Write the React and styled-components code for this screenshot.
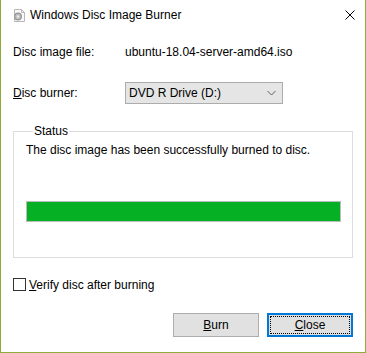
import React from "react"
import styled, { createGlobalStyle } from "styled-components"

const GlobalStyle = createGlobalStyle`
  html, body {
    margin: 0;
    padding: 0;
    background: #ffffff;
  }
  body {
    font-family: "Segoe UI", "Liberation Sans", Arial, sans-serif;
    font-size: 12px;
    color: #000;
  }
`;

const DiscIcon = () => (
  <svg width="14" height="15" viewBox="0 0 14 15">
    <path d="M2.5 1.5 H9.5 L12.5 4.5 V13.5 H2.5 Z" fill="#fafafa" stroke="#b8b8b8" />
    <path d="M9.5 1.5 V4.5 H12.5" fill="none" stroke="#b8b8b8" />
    <circle cx="6" cy="8.5" r="4" fill="#9a9a9a" />
    <circle cx="6" cy="8.5" r="2.6" fill="#c4c4c4" />
    <circle cx="6" cy="8.5" r="1" fill="#f4f4f4" />
  </svg>
);

const CloseGlyph = () => (
  <svg width="10" height="10" viewBox="0 0 10 10">
    <path d="M0.5 0.5 L9.5 9.5 M9.5 0.5 L0.5 9.5" stroke="#000" strokeWidth="1" fill="none" />
  </svg>
);

const Chevron = () => (
  <svg width="9" height="6" viewBox="0 0 9 6">
    <path d="M0.5 1 L4.5 5 L8.5 1" stroke="#606060" strokeWidth="1" fill="none" />
  </svg>
);

const App = () => {
  return (
    <>
      <GlobalStyle />
      <Window>
        <TitleBar>
          <IconWrap>
            <DiscIcon />
          </IconWrap>
          <Title>Windows Disc Image Burner</Title>
          <CloseBox>
            <CloseGlyph />
          </CloseBox>
        </TitleBar>
        <Content>
          <Row height="24px">
            <Label>Disc image file:</Label>
            <Value>ubuntu-18.04-server-amd64.iso</Value>
          </Row>
          <Row height="22px" top="18px">
            <Label>
              <u>D</u>isc burner:
            </Label>
            <Select>
              <span>DVD R Drive (D:)</span>
              <Chevron />
            </Select>
          </Row>
          <Group>
            <Legend>Status</Legend>
            <StatusText>The disc image has been successfully burned to disc.</StatusText>
            <Progress>
              <ProgressFill style={{ width: "100%" }} />
            </Progress>
          </Group>
          <CheckRow>
            <Box />
            <span>
              <u>V</u>erify disc after burning
            </span>
          </CheckRow>
          <Buttons>
            <Button>
              <u>B</u>urn
            </Button>
            <Button focused>
              <Focus>
                <u>C</u>lose
              </Focus>
            </Button>
          </Buttons>
        </Content>
      </Window>
    </>
  )
};
export default App

const Window = styled.div`
  width: 366px;
  height: 353px;
  box-sizing: border-box;
  border: 1px solid #8fac3a;
  border-top: none;
  background: #ffffff;
  display: flex;
  flex-direction: column;
`;

const TitleBar = styled.div`
  height: 30px;
  display: flex;
  align-items: center;
  padding-left: 10px;
`;

const IconWrap = styled.div`
  width: 16px;
  height: 16px;
  display: flex;
  align-items: center;
  justify-content: center;
  margin-top: 1px;
`;

const Title = styled.div`
  margin-left: 3px;
  flex: 1;
  font-size: 12px;
  line-height: 16px;
`;

const CloseBox = styled.div`
  width: 10px;
  height: 10px;
  margin-right: 10px;
  display: flex;
`;

const Content = styled.div`
  padding: 10px 12px 0 12px;
  display: flex;
  flex-direction: column;
`;

const Row = styled.div`
  display: flex;
  align-items: center;
  height: ${p => p.height};
  margin-top: ${p => p.top || "0"};
`;

const Label = styled.div`
  width: 112px;
  flex: 0 0 auto;
`;

const Value = styled.div`
  flex: 1;
`;

const Select = styled.div`
  width: 158px;
  height: 22px;
  box-sizing: border-box;
  border: 1px solid #acacac;
  background: #e5e5e5;
  display: flex;
  align-items: center;
  justify-content: space-between;
  padding: 0 6px 0 3px;
`;

const Group = styled.fieldset`
  margin: 20px 0 0 0;
  padding: 0 11px 0 12px;
  height: 134px;
  box-sizing: border-box;
  border: 1px solid #dcdcdc;
  min-width: 0;
`;

const Legend = styled.legend`
  padding: 0 1px;
  margin-left: 7px;
  line-height: 14px;
`;

const StatusText = styled.div`
  margin-top: 4px;
  line-height: 16px;
`;

const Progress = styled.div`
  margin-top: 43px;
  height: 21px;
  box-sizing: border-box;
  border: 1px solid #bcbcbc;
  background: #e6e6e6;
  display: flex;
`;

const ProgressFill = styled.div`
  background: #06b025;
  height: 100%;
`;

const CheckRow = styled.div`
  margin-top: 20px;
  display: flex;
  align-items: center;
  height: 13px;
  gap: 3px;
`;

const Box = styled.div`
  width: 13px;
  height: 13px;
  box-sizing: border-box;
  border: 1px solid #333333;
  background: #fff;
`;

const Buttons = styled.div`
  margin-top: 22px;
  display: flex;
  justify-content: flex-end;
  gap: 8px;
`;

const Button = styled.div`
  width: 86px;
  height: 24px;
  box-sizing: border-box;
  background: #e1e1e1;
  border: ${p => (p.focused ? "2px solid #0078d7" : "1px solid #adadad")};
  display: flex;
  align-items: center;
  justify-content: center;
  padding: ${p => (p.focused ? "0" : "1px")};
`;

const Focus = styled.div`
  flex: 1;
  align-self: stretch;
  margin: 1px;
  border: 1px dotted #000;
  display: flex;
  align-items: center;
  justify-content: center;
`;
